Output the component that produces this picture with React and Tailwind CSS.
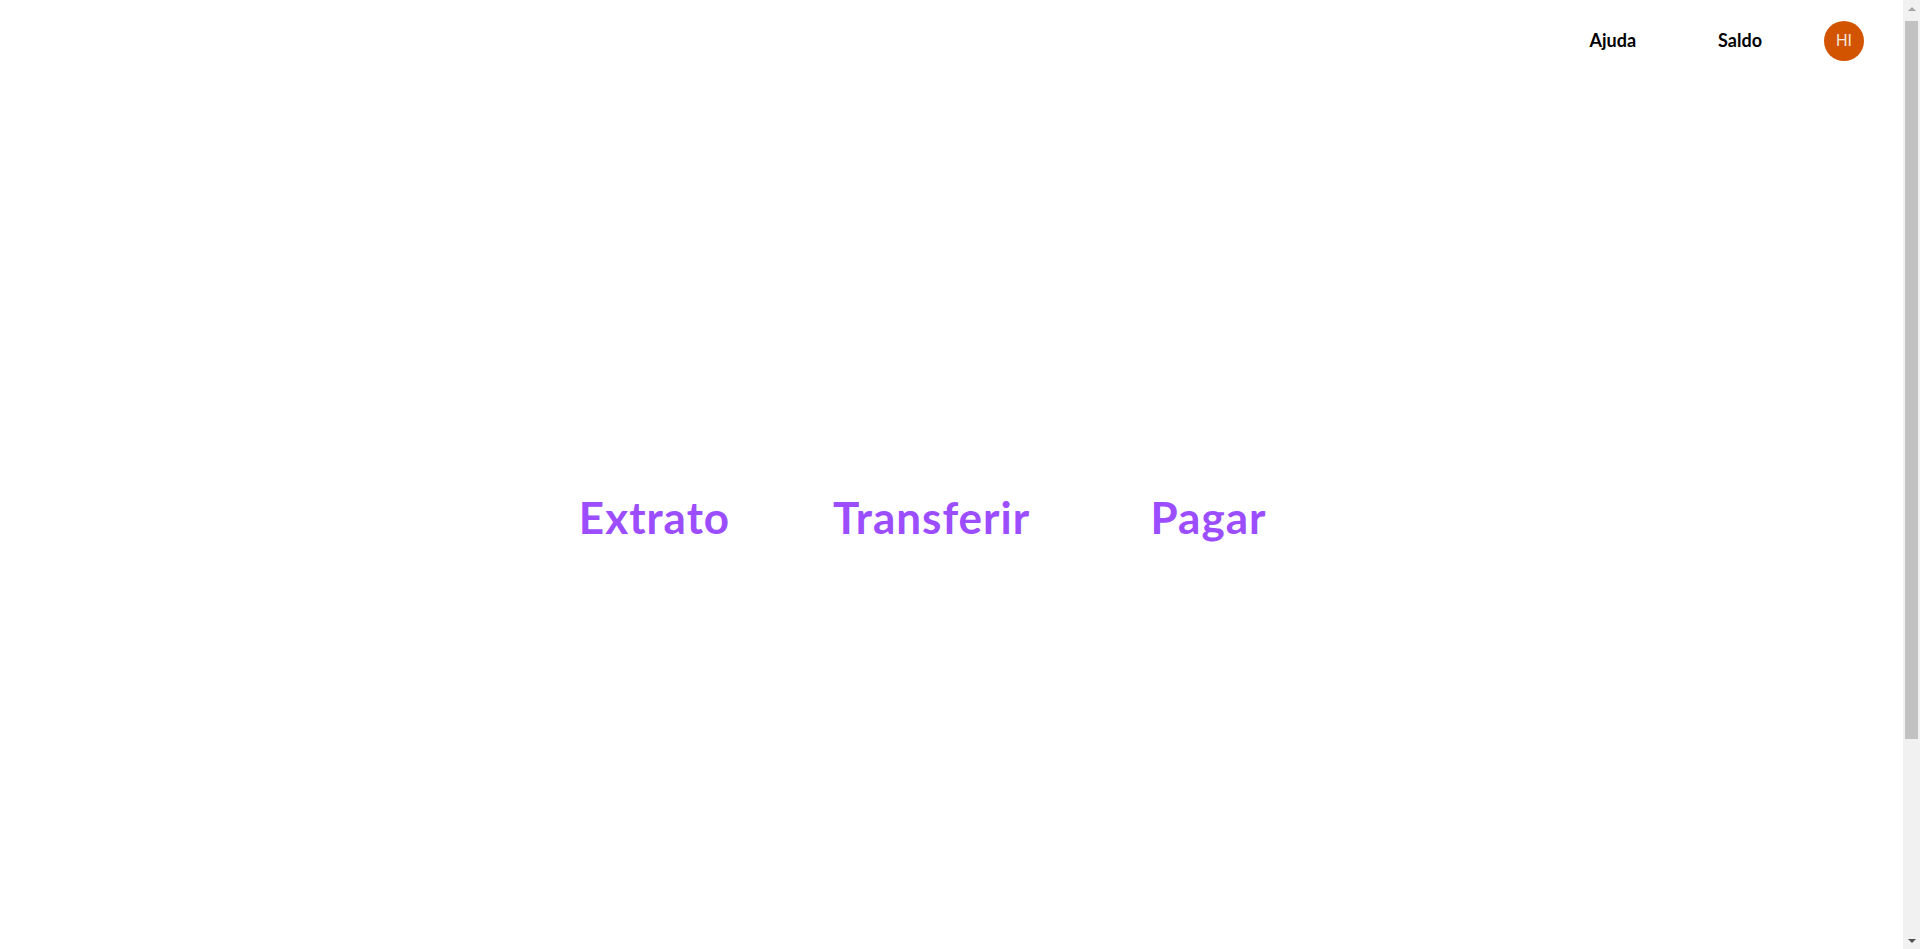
export default function App() {
  const links = ['Extrato', 'Transferir', 'Pagar']

  return (
    <div className="flex h-screen overflow-hidden bg-white font-['Lato',sans-serif]">
      <div className="flex-1">
        {/* topo */}
        <header className="flex h-[81px] items-center justify-end pr-[39px]">
          <nav className="flex items-center">
            <a className="text-[18px] font-bold text-black">Ajuda</a>
            <a className="ml-[82px] text-[18px] font-bold text-black">Saldo</a>
            <div className="ml-[62px] flex h-10 w-10 items-center justify-center rounded-full bg-[#d35400] font-['Liberation_Sans',sans-serif] text-[16px] text-[#f3e6dc]">
              HI
            </div>
          </nav>
        </header>

        {/* menu */}
        <main className="flex pl-[516px] pt-[406px]">
          {links.map(l => (
            <a key={l} className="w-[277px] text-center text-[44px] font-bold leading-[60px] tracking-[1px] text-[#9b4dff]">
              {l}
            </a>
          ))}
        </main>
      </div>

      {/* barra de rolagem */}
      <div className="flex w-[17px] flex-col bg-[#f1f1f1]">
        <div className="flex h-[17px] items-center justify-center">
          <div className="h-0 w-0 border-x-[4px] border-b-[4px] border-x-transparent border-b-[#a3a3a3]" />
        </div>
        <div className="mx-[2px] mt-[4px] h-[718px] bg-[#c1c1c1]" />
        <div className="flex-1" />
        <div className="flex h-[17px] items-center justify-center">
          <div className="h-0 w-0 border-x-[4px] border-t-[4px] border-x-transparent border-t-[#505050]" />
        </div>
      </div>
    </div>
  )
}
